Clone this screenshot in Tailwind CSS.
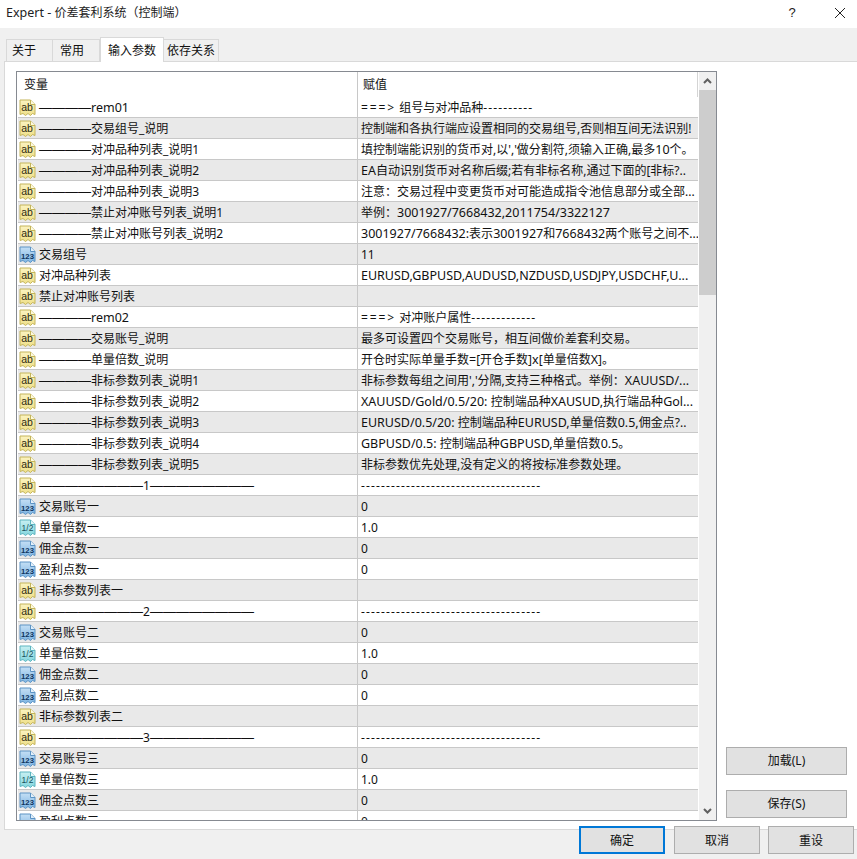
<!DOCTYPE html>
<html lang="zh-CN">
<head>
<meta charset="utf-8">
<title>Expert</title>
<script src="https://cdn.jsdelivr.net/npm/@tailwindcss/browser@4"></script>
</head>
<body class="m-0 bg-[#f0f0f0]">
<svg width="0" height="0" class="absolute">
  <defs>
    <linearGradient id="gy" x1="0" y1="0" x2="0" y2="1"><stop offset="0" stop-color="#fbf3c0"/><stop offset="1" stop-color="#efe08a"/></linearGradient>
    <linearGradient id="gb" x1="0" y1="0" x2="0" y2="1"><stop offset="0" stop-color="#c4dff5"/><stop offset="1" stop-color="#7db4e2"/></linearGradient>
    <linearGradient id="gt" x1="0" y1="0" x2="0" y2="1"><stop offset="0" stop-color="#c8f0f2"/><stop offset="1" stop-color="#84d6de"/></linearGradient>
    <symbol id="ab" viewBox="0 0 17 17">
      <path d="M1 1H11.5L16 5.5V15.5L13.5 14.5L11.5 16.5L9 14.5L6.5 16.5L4 14.5L1 15.5Z" fill="url(#gy)" stroke="#c4b45a"/>
      <path d="M11.5 1V5.5H16" fill="#fffbe0" stroke="#c4b45a"/>
      <text x="2.2" y="12" font-family="Liberation Sans" font-size="10.5" fill="#2e2a10">ab</text>
    </symbol>
    <symbol id="n" viewBox="0 0 17 17">
      <path d="M1 1H11.5L16 5.5V15.5L13.5 14.5L11.5 16.5L9 14.5L6.5 16.5L4 14.5L1 15.5Z" fill="url(#gb)" stroke="#5c93c4"/>
      <path d="M11.5 1V5.5H16" fill="#e4f1fb" stroke="#5c93c4"/>
      <text x="2" y="12.5" font-family="Liberation Sans" font-size="7.8" font-weight="700" fill="#0f3560">123</text>
    </symbol>
    <symbol id="f" viewBox="0 0 17 17">
      <path d="M1 1H11.5L16 5.5V15.5L13.5 14.5L11.5 16.5L9 14.5L6.5 16.5L4 14.5L1 15.5Z" fill="url(#gt)" stroke="#5cb4bf"/>
      <path d="M11.5 1V5.5H16" fill="#e6fafb" stroke="#5cb4bf"/>
      <text x="2.6" y="12" font-family="Liberation Sans" font-size="8.5" fill="#17505a">1/2</text>
    </symbol>
  </defs>
</svg>
<div class="w-[857px] h-[859px] overflow-hidden flex flex-col bg-[#f0f0f0] text-[12px] leading-[16px] text-[#111] font-['Noto_Sans','Noto_Sans_CJK_SC',sans-serif]">
  <header class="h-[28px] bg-white flex items-center pl-[6px] shrink-0">
    <span class="flex-1 whitespace-nowrap text-[#222] -mt-[2px]"><span class="text-[12.5px]">Expert -</span> 价差套利系统（控制端）</span>
    <span class="w-[10px] text-center mr-[38px] -mt-[3px] text-[13px] font-['Liberation_Sans'] text-[#222]">?</span>
    <svg class="mr-[12px] -mt-[3px]" width="10" height="10" viewBox="0 0 10 10"><path d="M0 0L10 10M10 0L0 10" stroke="#222" stroke-width="1" fill="none"/></svg>
  </header>

  <nav class="h-[33px] shrink-0 flex items-end pl-[6px]">
    <div class="w-[47px] h-[22px] border border-b-0 border-[#d9d9d9] flex items-center pl-[5px]">关于</div>
    <div class="w-[47px] h-[22px] border border-l-0 border-b-0 border-[#d9d9d9] flex items-center pl-[7px]">常用</div>
    <div class="relative z-10 w-[64px] h-[25px] -mb-[1px] pt-[1px] bg-white border border-b-0 border-[#d9d9d9] flex items-center justify-center">输入参数</div>
    <div class="w-[55px] h-[22px] border border-l-0 border-b-0 border-[#d9d9d9] flex items-center justify-center">依存关系</div>
  </nav>

  <section class="h-[769px] ml-[4px] shrink-0 bg-white border border-r-0 border-[#d9d9d9] flex pl-[11px] pt-[9px]">
    <div class="w-[701px] h-[750px] border border-[#868a91] flex overflow-hidden shrink-0">
      <div class="w-[681px] shrink-0">
        <div class="h-[25px] flex border-r border-[#d4d4d4]">
          <div class="w-[341px] border-r border-[#c8c8c8] pl-[7px] pt-[1px] flex items-center">变量</div>
          <div class="pl-[5px] pt-[1px] flex items-center">赋值</div>
        </div>
        <div class="pl-[1px]">
          <div class="flex h-[21px] border-b border-[#c8c8c8] odd:bg-white even:bg-[#e9e9e9]"><div class="w-[340px] shrink-0 border-r border-[#c8c8c8] pl-[1px] pt-[1px] flex items-center gap-[3px] whitespace-nowrap"><svg class="w-[17px] h-[17px] shrink-0"><use href="#ab"/></svg><span><span class="text-[13px] font-['Liberation_Sans']">————</span><span class="text-[12.5px]">rem01</span></span></div><div class="pl-[3px] pt-[1px] flex items-center whitespace-pre overflow-hidden"><span class="tracking-[1.9px]">===&gt;</span> 组号与对冲品种<span class="tracking-[1.14px]">----------</span></div></div>
          <div class="flex h-[21px] border-b border-[#c8c8c8] odd:bg-white even:bg-[#e9e9e9]"><div class="w-[340px] shrink-0 border-r border-[#c8c8c8] pl-[1px] pt-[1px] flex items-center gap-[3px] whitespace-nowrap"><svg class="w-[17px] h-[17px] shrink-0"><use href="#ab"/></svg><span><span class="text-[13px] font-['Liberation_Sans']">————</span>交易组号_说明</span></div><div class="pl-[3px] pt-[1px] flex items-center whitespace-pre overflow-hidden">控制端和各执行端应设置相同的交易组号,否则相互间无法识别!</div></div>
          <div class="flex h-[21px] border-b border-[#c8c8c8] odd:bg-white even:bg-[#e9e9e9]"><div class="w-[340px] shrink-0 border-r border-[#c8c8c8] pl-[1px] pt-[1px] flex items-center gap-[3px] whitespace-nowrap"><svg class="w-[17px] h-[17px] shrink-0"><use href="#ab"/></svg><span><span class="text-[13px] font-['Liberation_Sans']">————</span>对冲品种列表_说明1</span></div><div class="pl-[3px] pt-[1px] flex items-center whitespace-pre overflow-hidden">填控制端能识别的货币对,以','做分割符,须输入正确,最多<span class="text-[12.5px]">10</span>个。</div></div>
          <div class="flex h-[21px] border-b border-[#c8c8c8] odd:bg-white even:bg-[#e9e9e9]"><div class="w-[340px] shrink-0 border-r border-[#c8c8c8] pl-[1px] pt-[1px] flex items-center gap-[3px] whitespace-nowrap"><svg class="w-[17px] h-[17px] shrink-0"><use href="#ab"/></svg><span><span class="text-[13px] font-['Liberation_Sans']">————</span>对冲品种列表_说明2</span></div><div class="pl-[3px] pt-[1px] flex items-center whitespace-pre overflow-hidden"><span class="text-[12.5px]">EA</span>自动识别货币对名称后缀;若有非标名称,通过下面的[非标?..</div></div>
          <div class="flex h-[21px] border-b border-[#c8c8c8] odd:bg-white even:bg-[#e9e9e9]"><div class="w-[340px] shrink-0 border-r border-[#c8c8c8] pl-[1px] pt-[1px] flex items-center gap-[3px] whitespace-nowrap"><svg class="w-[17px] h-[17px] shrink-0"><use href="#ab"/></svg><span><span class="text-[13px] font-['Liberation_Sans']">————</span>对冲品种列表_说明3</span></div><div class="pl-[3px] pt-[1px] flex items-center whitespace-pre overflow-hidden">注意：交易过程中变更货币对可能造成指令池信息部分或全部...</div></div>
          <div class="flex h-[21px] border-b border-[#c8c8c8] odd:bg-white even:bg-[#e9e9e9]"><div class="w-[340px] shrink-0 border-r border-[#c8c8c8] pl-[1px] pt-[1px] flex items-center gap-[3px] whitespace-nowrap"><svg class="w-[17px] h-[17px] shrink-0"><use href="#ab"/></svg><span><span class="text-[13px] font-['Liberation_Sans']">————</span>禁止对冲账号列表_说明1</span></div><div class="pl-[3px] pt-[1px] flex items-center whitespace-pre overflow-hidden">举例：<span class="text-[12.5px]">3001927/7668432,2011754/3322127</span></div></div>
          <div class="flex h-[21px] border-b border-[#c8c8c8] odd:bg-white even:bg-[#e9e9e9]"><div class="w-[340px] shrink-0 border-r border-[#c8c8c8] pl-[1px] pt-[1px] flex items-center gap-[3px] whitespace-nowrap"><svg class="w-[17px] h-[17px] shrink-0"><use href="#ab"/></svg><span><span class="text-[13px] font-['Liberation_Sans']">————</span>禁止对冲账号列表_说明2</span></div><div class="pl-[3px] pt-[1px] flex items-center whitespace-pre overflow-hidden"><span class="text-[12.5px]">3001927/7668432:</span>表示<span class="text-[12.5px]">3001927</span>和<span class="text-[12.5px]">7668432</span>两个账号之间不...</div></div>
          <div class="flex h-[21px] border-b border-[#c8c8c8] odd:bg-white even:bg-[#e9e9e9]"><div class="w-[340px] shrink-0 border-r border-[#c8c8c8] pl-[1px] pt-[1px] flex items-center gap-[3px] whitespace-nowrap"><svg class="w-[17px] h-[17px] shrink-0"><use href="#n"/></svg><span>交易组号</span></div><div class="pl-[3px] pt-[1px] flex items-center whitespace-pre overflow-hidden">11</div></div>
          <div class="flex h-[21px] border-b border-[#c8c8c8] odd:bg-white even:bg-[#e9e9e9]"><div class="w-[340px] shrink-0 border-r border-[#c8c8c8] pl-[1px] pt-[1px] flex items-center gap-[3px] whitespace-nowrap"><svg class="w-[17px] h-[17px] shrink-0"><use href="#ab"/></svg><span>对冲品种列表</span></div><div class="pl-[3px] pt-[1px] flex items-center whitespace-pre overflow-hidden text-[12.5px]">EURUSD,GBPUSD,AUDUSD,NZDUSD,USDJPY,USDCHF,U...</div></div>
          <div class="flex h-[21px] border-b border-[#c8c8c8] odd:bg-white even:bg-[#e9e9e9]"><div class="w-[340px] shrink-0 border-r border-[#c8c8c8] pl-[1px] pt-[1px] flex items-center gap-[3px] whitespace-nowrap"><svg class="w-[17px] h-[17px] shrink-0"><use href="#ab"/></svg><span>禁止对冲账号列表</span></div><div class="pl-[3px] pt-[1px] flex items-center whitespace-pre overflow-hidden"></div></div>
          <div class="flex h-[21px] border-b border-[#c8c8c8] odd:bg-white even:bg-[#e9e9e9]"><div class="w-[340px] shrink-0 border-r border-[#c8c8c8] pl-[1px] pt-[1px] flex items-center gap-[3px] whitespace-nowrap"><svg class="w-[17px] h-[17px] shrink-0"><use href="#ab"/></svg><span><span class="text-[13px] font-['Liberation_Sans']">————</span><span class="text-[12.5px]">rem02</span></span></div><div class="pl-[3px] pt-[1px] flex items-center whitespace-pre overflow-hidden"><span class="tracking-[1.9px]">===&gt;</span> 对冲账户属性<span class="tracking-[1.14px]">-------------</span></div></div>
          <div class="flex h-[21px] border-b border-[#c8c8c8] odd:bg-white even:bg-[#e9e9e9]"><div class="w-[340px] shrink-0 border-r border-[#c8c8c8] pl-[1px] pt-[1px] flex items-center gap-[3px] whitespace-nowrap"><svg class="w-[17px] h-[17px] shrink-0"><use href="#ab"/></svg><span><span class="text-[13px] font-['Liberation_Sans']">————</span>交易账号_说明</span></div><div class="pl-[3px] pt-[1px] flex items-center whitespace-pre overflow-hidden">最多可设置四个交易账号，相互间做价差套利交易。</div></div>
          <div class="flex h-[21px] border-b border-[#c8c8c8] odd:bg-white even:bg-[#e9e9e9]"><div class="w-[340px] shrink-0 border-r border-[#c8c8c8] pl-[1px] pt-[1px] flex items-center gap-[3px] whitespace-nowrap"><svg class="w-[17px] h-[17px] shrink-0"><use href="#ab"/></svg><span><span class="text-[13px] font-['Liberation_Sans']">————</span>单量倍数_说明</span></div><div class="pl-[3px] pt-[1px] flex items-center whitespace-pre overflow-hidden">开仓时实际单量手数<span class="text-[12.5px]">=</span>[开仓手数]<span class="text-[12.5px]">x</span>[单量倍数<span class="text-[12.5px]">X</span>]。</div></div>
          <div class="flex h-[21px] border-b border-[#c8c8c8] odd:bg-white even:bg-[#e9e9e9]"><div class="w-[340px] shrink-0 border-r border-[#c8c8c8] pl-[1px] pt-[1px] flex items-center gap-[3px] whitespace-nowrap"><svg class="w-[17px] h-[17px] shrink-0"><use href="#ab"/></svg><span><span class="text-[13px] font-['Liberation_Sans']">————</span>非标参数列表_说明1</span></div><div class="pl-[3px] pt-[1px] flex items-center whitespace-pre overflow-hidden">非标参数每组之间用','分隔,支持三种格式。举例：<span class="text-[12.5px]">XAUUSD/...</span></div></div>
          <div class="flex h-[21px] border-b border-[#c8c8c8] odd:bg-white even:bg-[#e9e9e9]"><div class="w-[340px] shrink-0 border-r border-[#c8c8c8] pl-[1px] pt-[1px] flex items-center gap-[3px] whitespace-nowrap"><svg class="w-[17px] h-[17px] shrink-0"><use href="#ab"/></svg><span><span class="text-[13px] font-['Liberation_Sans']">————</span>非标参数列表_说明2</span></div><div class="pl-[3px] pt-[1px] flex items-center whitespace-pre overflow-hidden"><span class="text-[12.5px]">XAUUSD/Gold/0.5/20: </span>控制端品种<span class="text-[12.5px]">XAUSUD,</span>执行端品种<span class="text-[12.5px]">Gol...</span></div></div>
          <div class="flex h-[21px] border-b border-[#c8c8c8] odd:bg-white even:bg-[#e9e9e9]"><div class="w-[340px] shrink-0 border-r border-[#c8c8c8] pl-[1px] pt-[1px] flex items-center gap-[3px] whitespace-nowrap"><svg class="w-[17px] h-[17px] shrink-0"><use href="#ab"/></svg><span><span class="text-[13px] font-['Liberation_Sans']">————</span>非标参数列表_说明3</span></div><div class="pl-[3px] pt-[1px] flex items-center whitespace-pre overflow-hidden"><span class="text-[12.5px]">EURUSD/0.5/20: </span>控制端品种<span class="text-[12.5px]">EURUSD,</span>单量倍数<span class="text-[12.5px]">0.5,</span>佣金点?..</div></div>
          <div class="flex h-[21px] border-b border-[#c8c8c8] odd:bg-white even:bg-[#e9e9e9]"><div class="w-[340px] shrink-0 border-r border-[#c8c8c8] pl-[1px] pt-[1px] flex items-center gap-[3px] whitespace-nowrap"><svg class="w-[17px] h-[17px] shrink-0"><use href="#ab"/></svg><span><span class="text-[13px] font-['Liberation_Sans']">————</span>非标参数列表_说明4</span></div><div class="pl-[3px] pt-[1px] flex items-center whitespace-pre overflow-hidden"><span class="text-[12.5px]">GBPUSD/0.5: </span>控制端品种<span class="text-[12.5px]">GBPUSD,</span>单量倍数<span class="text-[12.5px]">0.5</span>。</div></div>
          <div class="flex h-[21px] border-b border-[#c8c8c8] odd:bg-white even:bg-[#e9e9e9]"><div class="w-[340px] shrink-0 border-r border-[#c8c8c8] pl-[1px] pt-[1px] flex items-center gap-[3px] whitespace-nowrap"><svg class="w-[17px] h-[17px] shrink-0"><use href="#ab"/></svg><span><span class="text-[13px] font-['Liberation_Sans']">————</span>非标参数列表_说明5</span></div><div class="pl-[3px] pt-[1px] flex items-center whitespace-pre overflow-hidden">非标参数优先处理,没有定义的将按标准参数处理。</div></div>
          <div class="flex h-[21px] border-b border-[#c8c8c8] odd:bg-white even:bg-[#e9e9e9]"><div class="w-[340px] shrink-0 border-r border-[#c8c8c8] pl-[1px] pt-[1px] flex items-center gap-[3px] whitespace-nowrap"><svg class="w-[17px] h-[17px] shrink-0"><use href="#ab"/></svg><span><span class="text-[13px] font-['Liberation_Sans']">————————</span>1<span class="text-[13px] font-['Liberation_Sans']">————————</span></span></div><div class="pl-[3px] pt-[1px] flex items-center whitespace-pre overflow-hidden tracking-[1.14px]">------------------------------------</div></div>
          <div class="flex h-[21px] border-b border-[#c8c8c8] odd:bg-white even:bg-[#e9e9e9]"><div class="w-[340px] shrink-0 border-r border-[#c8c8c8] pl-[1px] pt-[1px] flex items-center gap-[3px] whitespace-nowrap"><svg class="w-[17px] h-[17px] shrink-0"><use href="#n"/></svg><span>交易账号一</span></div><div class="pl-[3px] pt-[1px] flex items-center whitespace-pre overflow-hidden">0</div></div>
          <div class="flex h-[21px] border-b border-[#c8c8c8] odd:bg-white even:bg-[#e9e9e9]"><div class="w-[340px] shrink-0 border-r border-[#c8c8c8] pl-[1px] pt-[1px] flex items-center gap-[3px] whitespace-nowrap"><svg class="w-[17px] h-[17px] shrink-0"><use href="#f"/></svg><span>单量倍数一</span></div><div class="pl-[3px] pt-[1px] flex items-center whitespace-pre overflow-hidden">1.0</div></div>
          <div class="flex h-[21px] border-b border-[#c8c8c8] odd:bg-white even:bg-[#e9e9e9]"><div class="w-[340px] shrink-0 border-r border-[#c8c8c8] pl-[1px] pt-[1px] flex items-center gap-[3px] whitespace-nowrap"><svg class="w-[17px] h-[17px] shrink-0"><use href="#n"/></svg><span>佣金点数一</span></div><div class="pl-[3px] pt-[1px] flex items-center whitespace-pre overflow-hidden">0</div></div>
          <div class="flex h-[21px] border-b border-[#c8c8c8] odd:bg-white even:bg-[#e9e9e9]"><div class="w-[340px] shrink-0 border-r border-[#c8c8c8] pl-[1px] pt-[1px] flex items-center gap-[3px] whitespace-nowrap"><svg class="w-[17px] h-[17px] shrink-0"><use href="#n"/></svg><span>盈利点数一</span></div><div class="pl-[3px] pt-[1px] flex items-center whitespace-pre overflow-hidden">0</div></div>
          <div class="flex h-[21px] border-b border-[#c8c8c8] odd:bg-white even:bg-[#e9e9e9]"><div class="w-[340px] shrink-0 border-r border-[#c8c8c8] pl-[1px] pt-[1px] flex items-center gap-[3px] whitespace-nowrap"><svg class="w-[17px] h-[17px] shrink-0"><use href="#ab"/></svg><span>非标参数列表一</span></div><div class="pl-[3px] pt-[1px] flex items-center whitespace-pre overflow-hidden"></div></div>
          <div class="flex h-[21px] border-b border-[#c8c8c8] odd:bg-white even:bg-[#e9e9e9]"><div class="w-[340px] shrink-0 border-r border-[#c8c8c8] pl-[1px] pt-[1px] flex items-center gap-[3px] whitespace-nowrap"><svg class="w-[17px] h-[17px] shrink-0"><use href="#ab"/></svg><span><span class="text-[13px] font-['Liberation_Sans']">————————</span>2<span class="text-[13px] font-['Liberation_Sans']">————————</span></span></div><div class="pl-[3px] pt-[1px] flex items-center whitespace-pre overflow-hidden tracking-[1.14px]">------------------------------------</div></div>
          <div class="flex h-[21px] border-b border-[#c8c8c8] odd:bg-white even:bg-[#e9e9e9]"><div class="w-[340px] shrink-0 border-r border-[#c8c8c8] pl-[1px] pt-[1px] flex items-center gap-[3px] whitespace-nowrap"><svg class="w-[17px] h-[17px] shrink-0"><use href="#n"/></svg><span>交易账号二</span></div><div class="pl-[3px] pt-[1px] flex items-center whitespace-pre overflow-hidden">0</div></div>
          <div class="flex h-[21px] border-b border-[#c8c8c8] odd:bg-white even:bg-[#e9e9e9]"><div class="w-[340px] shrink-0 border-r border-[#c8c8c8] pl-[1px] pt-[1px] flex items-center gap-[3px] whitespace-nowrap"><svg class="w-[17px] h-[17px] shrink-0"><use href="#f"/></svg><span>单量倍数二</span></div><div class="pl-[3px] pt-[1px] flex items-center whitespace-pre overflow-hidden">1.0</div></div>
          <div class="flex h-[21px] border-b border-[#c8c8c8] odd:bg-white even:bg-[#e9e9e9]"><div class="w-[340px] shrink-0 border-r border-[#c8c8c8] pl-[1px] pt-[1px] flex items-center gap-[3px] whitespace-nowrap"><svg class="w-[17px] h-[17px] shrink-0"><use href="#n"/></svg><span>佣金点数二</span></div><div class="pl-[3px] pt-[1px] flex items-center whitespace-pre overflow-hidden">0</div></div>
          <div class="flex h-[21px] border-b border-[#c8c8c8] odd:bg-white even:bg-[#e9e9e9]"><div class="w-[340px] shrink-0 border-r border-[#c8c8c8] pl-[1px] pt-[1px] flex items-center gap-[3px] whitespace-nowrap"><svg class="w-[17px] h-[17px] shrink-0"><use href="#n"/></svg><span>盈利点数二</span></div><div class="pl-[3px] pt-[1px] flex items-center whitespace-pre overflow-hidden">0</div></div>
          <div class="flex h-[21px] border-b border-[#c8c8c8] odd:bg-white even:bg-[#e9e9e9]"><div class="w-[340px] shrink-0 border-r border-[#c8c8c8] pl-[1px] pt-[1px] flex items-center gap-[3px] whitespace-nowrap"><svg class="w-[17px] h-[17px] shrink-0"><use href="#ab"/></svg><span>非标参数列表二</span></div><div class="pl-[3px] pt-[1px] flex items-center whitespace-pre overflow-hidden"></div></div>
          <div class="flex h-[21px] border-b border-[#c8c8c8] odd:bg-white even:bg-[#e9e9e9]"><div class="w-[340px] shrink-0 border-r border-[#c8c8c8] pl-[1px] pt-[1px] flex items-center gap-[3px] whitespace-nowrap"><svg class="w-[17px] h-[17px] shrink-0"><use href="#ab"/></svg><span><span class="text-[13px] font-['Liberation_Sans']">————————</span>3<span class="text-[13px] font-['Liberation_Sans']">————————</span></span></div><div class="pl-[3px] pt-[1px] flex items-center whitespace-pre overflow-hidden tracking-[1.14px]">------------------------------------</div></div>
          <div class="flex h-[21px] border-b border-[#c8c8c8] odd:bg-white even:bg-[#e9e9e9]"><div class="w-[340px] shrink-0 border-r border-[#c8c8c8] pl-[1px] pt-[1px] flex items-center gap-[3px] whitespace-nowrap"><svg class="w-[17px] h-[17px] shrink-0"><use href="#n"/></svg><span>交易账号三</span></div><div class="pl-[3px] pt-[1px] flex items-center whitespace-pre overflow-hidden">0</div></div>
          <div class="flex h-[21px] border-b border-[#c8c8c8] odd:bg-white even:bg-[#e9e9e9]"><div class="w-[340px] shrink-0 border-r border-[#c8c8c8] pl-[1px] pt-[1px] flex items-center gap-[3px] whitespace-nowrap"><svg class="w-[17px] h-[17px] shrink-0"><use href="#f"/></svg><span>单量倍数三</span></div><div class="pl-[3px] pt-[1px] flex items-center whitespace-pre overflow-hidden">1.0</div></div>
          <div class="flex h-[21px] border-b border-[#c8c8c8] odd:bg-white even:bg-[#e9e9e9]"><div class="w-[340px] shrink-0 border-r border-[#c8c8c8] pl-[1px] pt-[1px] flex items-center gap-[3px] whitespace-nowrap"><svg class="w-[17px] h-[17px] shrink-0"><use href="#n"/></svg><span>佣金点数三</span></div><div class="pl-[3px] pt-[1px] flex items-center whitespace-pre overflow-hidden">0</div></div>
          <div class="flex h-[21px] border-b border-[#c8c8c8] odd:bg-white even:bg-[#e9e9e9]"><div class="w-[340px] shrink-0 border-r border-[#c8c8c8] pl-[1px] pt-[1px] flex items-center gap-[3px] whitespace-nowrap"><svg class="w-[17px] h-[17px] shrink-0"><use href="#n"/></svg><span>盈利点数三</span></div><div class="pl-[3px] pt-[1px] flex items-center whitespace-pre overflow-hidden">0</div></div>
        </div>
      </div>
      <div class="w-[17px] ml-[1px] bg-[#f0f0f0] flex flex-col shrink-0">
        <div class="h-[18px] flex items-center justify-center"><svg width="9" height="6" viewBox="0 0 9 6"><path d="M1 5L4.5 1.5L8 5" fill="none" stroke="#606060" stroke-width="2"/></svg></div>
        <div class="h-[205px] bg-[#cdcdcd]"></div>
        <div class="flex-1"></div>
        <div class="h-[18px] flex items-center justify-center"><svg width="9" height="6" viewBox="0 0 9 6"><path d="M1 1L4.5 4.5L8 1" fill="none" stroke="#606060" stroke-width="2"/></svg></div>
      </div>
    </div>
    <aside class="h-[750px] pl-[9px] pb-[3px] flex flex-col justify-end gap-[15px]">
      <button class="w-[121px] h-[28px] bg-[#e1e1e1] border border-[#adadad]">加载(L)</button>
      <button class="w-[121px] h-[28px] bg-[#e1e1e1] border border-[#adadad]">保存(S)</button>
    </aside>
  </section>

  <footer class="relative -mt-[4px] flex justify-end pr-[3px]">
    <button class="w-[86px] h-[28px] pt-[1px] bg-[#e1e1e1] border-2 border-[#0078d7]">确定</button>
    <button class="w-[86px] h-[28px] pt-[1px] ml-[9px] bg-[#e1e1e1] border border-[#adadad]">取消</button>
    <button class="w-[86px] h-[28px] pt-[1px] ml-[8px] bg-[#e1e1e1] border border-[#adadad]">重设</button>
  </footer>
</div>
</body>
</html>
